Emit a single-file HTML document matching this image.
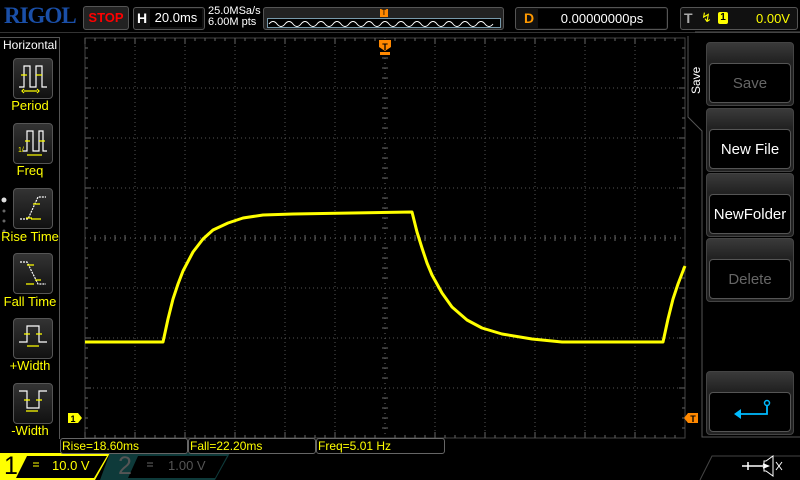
<!DOCTYPE html>
<html><head><meta charset="utf-8"><style>
body{margin:0;background:#000;width:800px;height:480px;overflow:hidden;position:relative;font-family:"Liberation Sans",sans-serif}
.a{position:absolute}
.btn{position:absolute;left:13px;width:38px;height:39px;border:1px solid #555;border-radius:4px;background:linear-gradient(#333,#111)}
.lbl{position:absolute;left:0;width:60px;text-align:center;color:#ff0;font-size:13px}
.rb{position:absolute;left:706px;width:86px;height:62px;border:1px solid #444;border-radius:4px;background:linear-gradient(#3a3a3a,#222 30%)}
.rb div{position:absolute;left:2px;right:2px;top:20px;bottom:2px;border:1px solid #555;border-radius:4px;background:#000;color:#fff;font-size:15px;text-align:center;line-height:40px}
.m{position:absolute;top:438px;height:14px;border:1px solid #666;border-radius:3px;color:#ff0;font-size:12px;line-height:14px;padding-left:1px}
</style></head><body>
<div class="a" style="left:4px;top:3px;color:#1a4fa8;font-family:'Liberation Serif',serif;font-weight:bold;font-size:23px;letter-spacing:-1px">RIGOL</div>
<div class="a" style="left:83px;top:6px;width:44px;height:22px;border:1px solid #555;border-radius:3px;background:#222;color:#f00;font-weight:bold;font-size:13px;text-align:center;line-height:22px">STOP</div>
<div class="a" style="left:133px;top:7px;width:70px;height:21px;border:1px solid #555;border-radius:3px;background:#111"><span class="a" style="left:3px;top:2px;color:#fff;font-weight:bold;font-size:14px">H</span><div class="a" style="left:16px;top:1px;width:52px;height:18px;background:#000;color:#fff;font-size:13px;line-height:18px;text-align:center">20.0ms</div></div>
<div class="a" style="left:208px;top:6px;color:#fff;font-size:11px;line-height:11px">25.0MSa/s<br>6.00M pts</div>
<div class="a" style="left:263px;top:7px;width:239px;height:21px;border:1px solid #555;border-radius:3px;background:#222"><svg class="a" style="left:3px;top:10px" width="234" height="10"><rect x="0.5" y="0.5" width="233" height="9" fill="#000" stroke="#79a"/><path d="M2 6 Q6 1 10 6 T18 6 T26 6 T34 6 T42 6 T50 6 T58 6 T66 6 T74 6 T82 6 T90 6 T98 6 T106 6 T114 6 T122 6 T130 6 T138 6 T146 6 T154 6 T162 6 T170 6 T178 6 T186 6 T194 6 T202 6 T210 6 T218 6 T226 6" fill="none" stroke="#fff"/></svg><div class="a" style="left:116px;top:1px;width:8px;height:8px;background:#f80;color:#000;font-size:8px;line-height:8px;text-align:center">T</div></div>
<div class="a" style="left:515px;top:7px;width:151px;height:21px;border:1px solid #555;border-radius:3px;background:#111"><span class="a" style="left:8px;top:2px;color:#f90;font-weight:bold;font-size:14px">D</span><div class="a" style="left:22px;top:1px;width:128px;height:19px;background:#000;color:#fff;font-size:13px;line-height:19px;text-align:center">0.00000000ps</div></div>
<div class="a" style="left:680px;top:7px;width:116px;height:21px;border:1px solid #555;border-radius:3px;background:#111"><span class="a" style="left:3px;top:2px;color:#aaa;font-weight:bold;font-size:14px">T</span><span class="a" style="left:20px;top:2px;color:#ff0;font-size:13px">&#x21af;</span><div class="a" style="left:37px;top:4px;width:10px;height:12px;background:#ff0;border-radius:2px;color:#000;font-size:10px;text-align:center;line-height:12px;font-weight:bold">1</div><span class="a" style="left:75px;top:3px;color:#ff0;font-size:13px">0.00V</span></div>
<div class="a" style="left:0;top:32px;width:800px;height:1px;background:#333"></div>
<div class="a" style="left:0;top:37px;width:59px;height:401px;border-right:1px solid #555;border-top:1px solid #555"></div>
<div class="a" style="left:3px;top:38px;color:#fff;font-size:12px">Horizontal</div>
<svg class="a" style="left:0;top:0" width="800" height="480">
<g fill="#bbb"><circle cx="4" cy="200" r="2.5" fill="#ddd"/><circle cx="4" cy="211" r="1.5" fill="#666"/><circle cx="4" cy="221" r="1.5" fill="#666"/><circle cx="4" cy="231" r="1.5" fill="#666"/></g>
</svg>
<div class="btn" style="top:58px"></div><div class="lbl" style="top:98px">Period</div>
<div class="btn" style="top:123px"></div><div class="lbl" style="top:163px">Freq</div>
<div class="btn" style="top:188px"></div><div class="lbl" style="top:229px">Rise Time</div>
<div class="btn" style="top:253px"></div><div class="lbl" style="top:294px">Fall Time</div>
<div class="btn" style="top:318px"></div><div class="lbl" style="top:358px">+Width</div>
<div class="btn" style="top:383px"></div><div class="lbl" style="top:423px">-Width</div>
<svg class="a" style="left:0;top:0" width="60" height="440" fill="none" stroke-width="1.2">
<path d="M19 87H24V66H30V87H36V66H42V87H47" stroke="#fff"/><path d="M21 75H27M36 75H42" stroke="#ff0"/><path d="M24 91H37M24 89l-2 2 2 2M37 89l2 2-2 2" stroke="#ff0"/>
<path d="M23 151H27V131H33V151H39V131H43V151H47" stroke="#fff"/><path d="M25 141H30M39 141H45" stroke="#ff0"/><path d="M27 155H42" stroke="#ff0"/><text x="18" y="152" fill="#ff0" font-size="7" stroke="none">1/</text>
<path d="M20 219H28L38 197H46" stroke="#fff" stroke-dasharray="2 1"/><path d="M33 204H40M26 218H32M31 219H41" stroke="#ff0"/>
<path d="M20 262H27L38 284H46" stroke="#fff" stroke-dasharray="2 1"/><path d="M27 265H34M35 280H41M26 284H34" stroke="#ff0"/>
<path d="M19 342H27V326H39V342H47" stroke="#fff"/><path d="M24 334H30M36 334H42M27 346H39" stroke="#ff0"/>
<path d="M19 391H27V408H39V391H47" stroke="#fff"/><path d="M24 400H30M36 400H42M26 411H38" stroke="#ff0"/>
</svg>
<svg class="a" style="left:0;top:0" width="800" height="480">
<rect x="85" y="38" width="600" height="400" fill="none" stroke="#444"/>
<g stroke="#555" stroke-dasharray="1 3">
<path d="M135 38V438M185 38V438M235 38V438M285 38V438M335 38V438M435 38V438M485 38V438M535 38V438M585 38V438M635 38V438"/>
<path d="M85 88H685M85 138H685M85 188H685M85 288H685M85 338H685M85 388H685"/>
</g>
<g stroke="#666"><path d="M385 38V438M85 238H685" stroke-dasharray="1 4"/></g>
<g stroke="#666">
<path d="M85 38V44M95 38V41M105 38V41M115 38V41M125 38V41M135 38V44M145 38V41M155 38V41M165 38V41M175 38V41M185 38V44M195 38V41M205 38V41M215 38V41M225 38V41M235 38V44M245 38V41M255 38V41M265 38V41M275 38V41M285 38V44M295 38V41M305 38V41M315 38V41M325 38V41M335 38V44M345 38V41M355 38V41M365 38V41M375 38V41M395 38V41M405 38V41M415 38V41M425 38V41M435 38V44M445 38V41M455 38V41M465 38V41M475 38V41M485 38V44M495 38V41M505 38V41M515 38V41M525 38V41M535 38V44M545 38V41M555 38V41M565 38V41M575 38V41M585 38V44M595 38V41M605 38V41M615 38V41M625 38V41M635 38V44M645 38V41M655 38V41M665 38V41M675 38V41"/>
<path d="M85 438V432M95 438V435M105 438V435M115 438V435M125 438V435M135 438V432M145 438V435M155 438V435M165 438V435M175 438V435M185 438V432M195 438V435M205 438V435M215 438V435M225 438V435M235 438V432M245 438V435M255 438V435M265 438V435M275 438V435M285 438V432M295 438V435M305 438V435M315 438V435M325 438V435M335 438V432M345 438V435M355 438V435M365 438V435M375 438V435M395 438V435M405 438V435M415 438V435M425 438V435M435 438V432M445 438V435M455 438V435M465 438V435M475 438V435M485 438V432M495 438V435M505 438V435M515 438V435M525 438V435M535 438V432M545 438V435M555 438V435M565 438V435M575 438V435M585 438V432M595 438V435M605 438V435M615 438V435M625 438V435M635 438V432M645 438V435M655 438V435M665 438V435M675 438V435"/>
<path d="M85 48H88M85 58H88M85 68H88M85 78H88M85 88H91M85 98H88M85 108H88M85 118H88M85 128H88M85 138H91M85 148H88M85 158H88M85 168H88M85 178H88M85 188H91M85 198H88M85 208H88M85 218H88M85 228H88M85 248H88M85 258H88M85 268H88M85 278H88M85 288H91M85 298H88M85 308H88M85 318H88M85 328H88M85 338H91M85 348H88M85 358H88M85 368H88M85 378H88M85 388H91M85 398H88M85 408H88M85 418H88M85 428H88"/>
<path d="M685 48H682M685 58H682M685 68H682M685 78H682M685 88H679M685 98H682M685 108H682M685 118H682M685 128H682M685 138H679M685 148H682M685 158H682M685 168H682M685 178H682M685 188H679M685 198H682M685 208H682M685 218H682M685 228H682M685 248H682M685 258H682M685 268H682M685 278H682M685 288H679M685 298H682M685 308H682M685 318H682M685 328H682M685 338H679M685 348H682M685 358H682M685 368H682M685 378H682M685 388H679M685 398H682M685 408H682M685 418H682M685 428H682"/>
<path d="M382 48H388M382 58H388M382 68H388M382 78H388M382 98H388M382 108H388M382 118H388M382 128H388M382 148H388M382 158H388M382 168H388M382 178H388M382 198H388M382 208H388M382 218H388M382 228H388M382 248H388M382 258H388M382 268H388M382 278H388M382 298H388M382 308H388M382 318H388M382 328H388M382 348H388M382 358H388M382 368H388M382 378H388M382 398H388M382 408H388M382 418H388M382 428H388"/>
<path d="M95 235V241M105 235V241M115 235V241M125 235V241M145 235V241M155 235V241M165 235V241M175 235V241M195 235V241M205 235V241M215 235V241M225 235V241M245 235V241M255 235V241M265 235V241M275 235V241M295 235V241M305 235V241M315 235V241M325 235V241M345 235V241M355 235V241M365 235V241M375 235V241M395 235V241M405 235V241M415 235V241M425 235V241M445 235V241M455 235V241M465 235V241M475 235V241M495 235V241M505 235V241M515 235V241M525 235V241M545 235V241M555 235V241M565 235V241M575 235V241M595 235V241M605 235V241M615 235V241M625 235V241M645 235V241M655 235V241M665 235V241M675 235V241"/>
</g>
<polyline fill="none" stroke="#ff0" stroke-width="3" stroke-linejoin="round" points="85,342 163,342 168,319 173,299 178,284 183,271 193,252 203,239 213,230 228,223 243,218 263,215 293,214 412,212 417,232 422,248 427,263 432,275 442,293 452,307 467,320 482,328 502,334 532,339 562,342 663,342 668,319 673,299 678,284 683,271 685,266"/>
<path d="M379 40h12v7l-6 4-6-4z" fill="#f80"/><text x="385" y="50" fill="#000" font-size="9" text-anchor="middle" font-weight="bold">T</text>
<path d="M380 52h10v3h-10z" fill="#f80"/>
<path d="M68 413h10l4 5-4 5h-10z" fill="#ff0"/><text x="73" y="422" font-size="9" text-anchor="middle" fill="#000" font-weight="bold">1</text>
<path d="M698 413h-10l-4 5 4 5h10z" fill="#f80"/><text x="693" y="422" font-size="9" text-anchor="middle" fill="#000" font-weight="bold">T</text>
<path d="M688 36V117L702 131V437H800" fill="none" stroke="#555"/>
<path d="M695 32H800" stroke="#555"/>
<path d="M700 480L712 456H800" fill="none" stroke="#444"/>
<path d="M0 453H110L95 480H0Z" fill="#ff0"/><path d="M27 456H107L94 478H16Z" fill="#000"/>
<path d="M110 453H230L215 480H100Z" fill="#0e3a3a"/><path d="M138 456H227L215 478H128Z" fill="#000"/>
<path d="M33 463h6M33 466h6" stroke="#ff0"/><path d="M147 463h6M147 466h6" stroke="#666"/>
<path d="M742 466h26M748 462v8M763 464l5 2-5 2" stroke="#fff" fill="none" stroke-width="1.5"/>
<path d="M766 461l7-5v20l-7-5h-2v-10z M776 462l6 8M782 462l-6 8" stroke="#fff" fill="none"/>
</svg>
<div class="a" style="left:4px;top:452px;font-size:25px;color:#000;line-height:28px">1</div>
<div class="a" style="left:52px;top:458px;font-size:13px;color:#ff0">10.0 V</div>
<div class="a" style="left:118px;top:452px;font-size:25px;color:#555;line-height:28px">2</div>
<div class="a" style="left:168px;top:458px;font-size:13px;color:#555">1.00 V</div>
<div class="m" style="left:60px;width:125px">Rise=18.60ms</div>
<div class="m" style="left:188px;width:125px">Fall=22.20ms</div>
<div class="m" style="left:316px;width:126px">Freq=5.01 Hz</div>
<div class="a" style="left:689px;color:#fff;font-size:12px;transform:rotate(-90deg);transform-origin:left top;top:94px">Save</div>
<div class="rb" style="top:42px"><div style="color:#666">Save</div></div>
<div class="rb" style="top:108px"><div>New File</div></div>
<div class="rb" style="top:173px"><div>NewFolder</div></div>
<div class="rb" style="top:238px"><div style="color:#666">Delete</div></div>
<div class="rb" style="top:371px"><div><svg width="82" height="38"><path d="M57 12v9H28" stroke="#0bf" stroke-width="1.8" fill="none"/><circle cx="57" cy="10" r="2.5" fill="none" stroke="#0bf" stroke-width="1.5"/><path d="M24 21l7-5v10z" fill="#0bf"/></svg></div></div>
</body></html>
